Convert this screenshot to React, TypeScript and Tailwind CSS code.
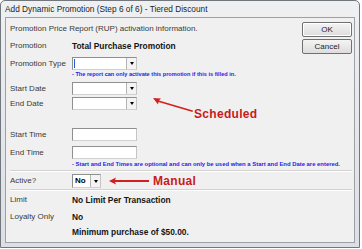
import React from "react";

const font = { fontFamily: '"Liberation Sans", Arial, sans-serif' };

const Arrow = () => (
  <span className="absolute right-0 top-0 bottom-0 w-[10px] border-l border-[#b5b5b5] bg-[#f4f4f4] flex items-center justify-center">
    <span className="block w-0 h-0 border-l-[2px] border-r-[2px] border-t-[3px] border-l-transparent border-r-transparent border-t-black" />
  </span>
);

const Dropdown = ({ cursor = false }: { cursor?: boolean }) => (
  <div className="relative w-[65px] h-[13px] bg-white border border-[#8e8f8f] border-b-[#d0d0d0] border-r-[#c4c4c4]">
    {cursor && <span className="absolute left-[1px] top-[1px] w-[1px] h-[9px] bg-[#2a5bd7]" />}
    <Arrow />
  </div>
);

const TextBox = () => (
  <div className="w-[65px] h-[13px] bg-white border border-[#8e8f8f] border-b-[#d0d0d0] border-r-[#c4c4c4]" />
);

const Label = ({ children }: { children: React.ReactNode }) => (
  <div className="w-[62px] shrink-0 text-[8px] text-[#3a3a3a]">{children}</div>
);

export default function App() {
  return (
    <div className="w-[362px] h-[249px] bg-white relative overflow-hidden" style={font}>
      <div className="w-[360px] h-[248px] border border-[#72777d] rounded-t-[5px] bg-gradient-to-b from-[#eef0f2] to-[#dcdfe3] flex flex-col">
        <div className="h-[16px] px-[4px] flex items-center text-[8.3px] text-[#1e1e1e]">
          Add Dynamic Promotion (Step 6 of 6) - Tiered Discount
        </div>
        <div className="mx-[4px] h-[226px] border border-[#9da1a6] bg-[#f0f0f0] relative pl-[4px] pr-[3px] flex">
          <div className="w-[292px] shrink-0 flex flex-col">
            <div className="h-[12px] mt-[5px] flex items-center text-[8px] text-[#3a3a3a]">
              Promotion Price Report (RUP) activation information.
            </div>
            <div className="h-[12px] mt-[5px] flex items-center">
              <Label>Promotion</Label>
              <span className="text-[8.4px] font-bold text-[#151515]">Total Purchase Promotion</span>
            </div>
            <div className="h-[13px] mt-[5px] flex items-center">
              <Label>Promotion Type</Label>
              <Dropdown cursor />
            </div>
            <div className="h-[8px] pl-[62px] flex items-center text-[5.6px] font-bold text-[#2323e8] whitespace-nowrap">
              - The report can only activate this promotion if this is filled in.
            </div>
            <div className="h-[13px] mt-[4px] flex items-center">
              <Label>Start Date</Label>
              <Dropdown />
            </div>
            <div className="h-[13px] mt-[2px] flex items-center">
              <Label>End Date</Label>
              <Dropdown />
            </div>
            <div className="h-[13px] mt-[18px] flex items-center">
              <Label>Start Time</Label>
              <TextBox />
            </div>
            <div className="h-[13px] mt-[5px] flex items-center">
              <Label>End Time</Label>
              <TextBox />
            </div>
            <div className="h-[8px] mt-[1px] pl-[62px] flex items-center text-[5.9px] font-bold text-[#2323e8] whitespace-nowrap">
              - Start and End Times are optional and can only be used when a Start and End Date are entered.
            </div>
            <div className="h-px mt-[2px] w-[342px] bg-[#d2d2d2] border-b border-white box-content" />
            <div className="h-[14px] mt-[2px] flex items-center">
              <Label>Active?</Label>
              <div className="relative w-[29px] h-[14px] bg-white border border-[#8e8f8f] border-b-[#d0d0d0] border-r-[#c4c4c4] text-[8px] font-bold pl-[2px] flex items-center">
                No
                <Arrow />
              </div>
              <svg width="40" height="8" viewBox="0 0 40 8" className="ml-[8px]">
                <polygon points="0,4 7,0.5 6,3 40,3 40,5 6,5 7,7.5" fill="#d21f1f" />
              </svg>
              <span className="ml-[4px] text-[12px] font-bold text-[#c81a1a] tracking-[0.3px]">Manual</span>
            </div>
            <div className="h-px mt-[1px] w-[342px] bg-[#d2d2d2] border-b border-white box-content" />
            <div className="h-[12px] mt-[3px] flex items-center">
              <Label>Limit</Label>
              <span className="text-[8.4px] font-bold text-[#151515]">No Limit Per Transaction</span>
            </div>
            <div className="h-[12px] mt-[5px] flex items-center">
              <Label>Loyalty Only</Label>
              <span className="text-[8.4px] font-bold text-[#151515]">No</span>
            </div>
            <div className="h-[12px] mt-[3px] flex items-center">
              <Label>{""}</Label>
              <span className="text-[8.4px] font-bold text-[#151515]">Minimum purchase of $50.00.</span>
            </div>
          </div>
          <div className="ml-auto flex flex-col gap-[2px] pt-[4px] pr-[1px]">
            <button className="w-[50px] h-[15px] border border-[#707070] rounded-[2px] bg-gradient-to-b from-[#f4f4f4] to-[#dddddd] text-[8px] text-[#1e1e1e] flex items-center justify-center shadow-[inset_0_0_0_1px_#ffffff]">
              OK
            </button>
            <button className="w-[50px] h-[15px] border border-[#707070] rounded-[2px] bg-gradient-to-b from-[#f4f4f4] to-[#dddddd] text-[8px] text-[#1e1e1e] flex items-center justify-center">
              Cancel
            </button>
          </div>
          <svg width="42" height="16" viewBox="0 0 42 16" className="absolute left-[146px] top-[79px]">
            <polygon points="1,1 9,1.5 7,3.5 41,13.5 40.5,15 6.5,5 6,7.5" fill="#d21f1f" />
          </svg>
          <span className="absolute left-[188px] top-[87px] text-[12px] font-bold text-[#c81a1a] tracking-[0.3px]">
            Scheduled
          </span>
        </div>
      </div>
    </div>
  );
}
